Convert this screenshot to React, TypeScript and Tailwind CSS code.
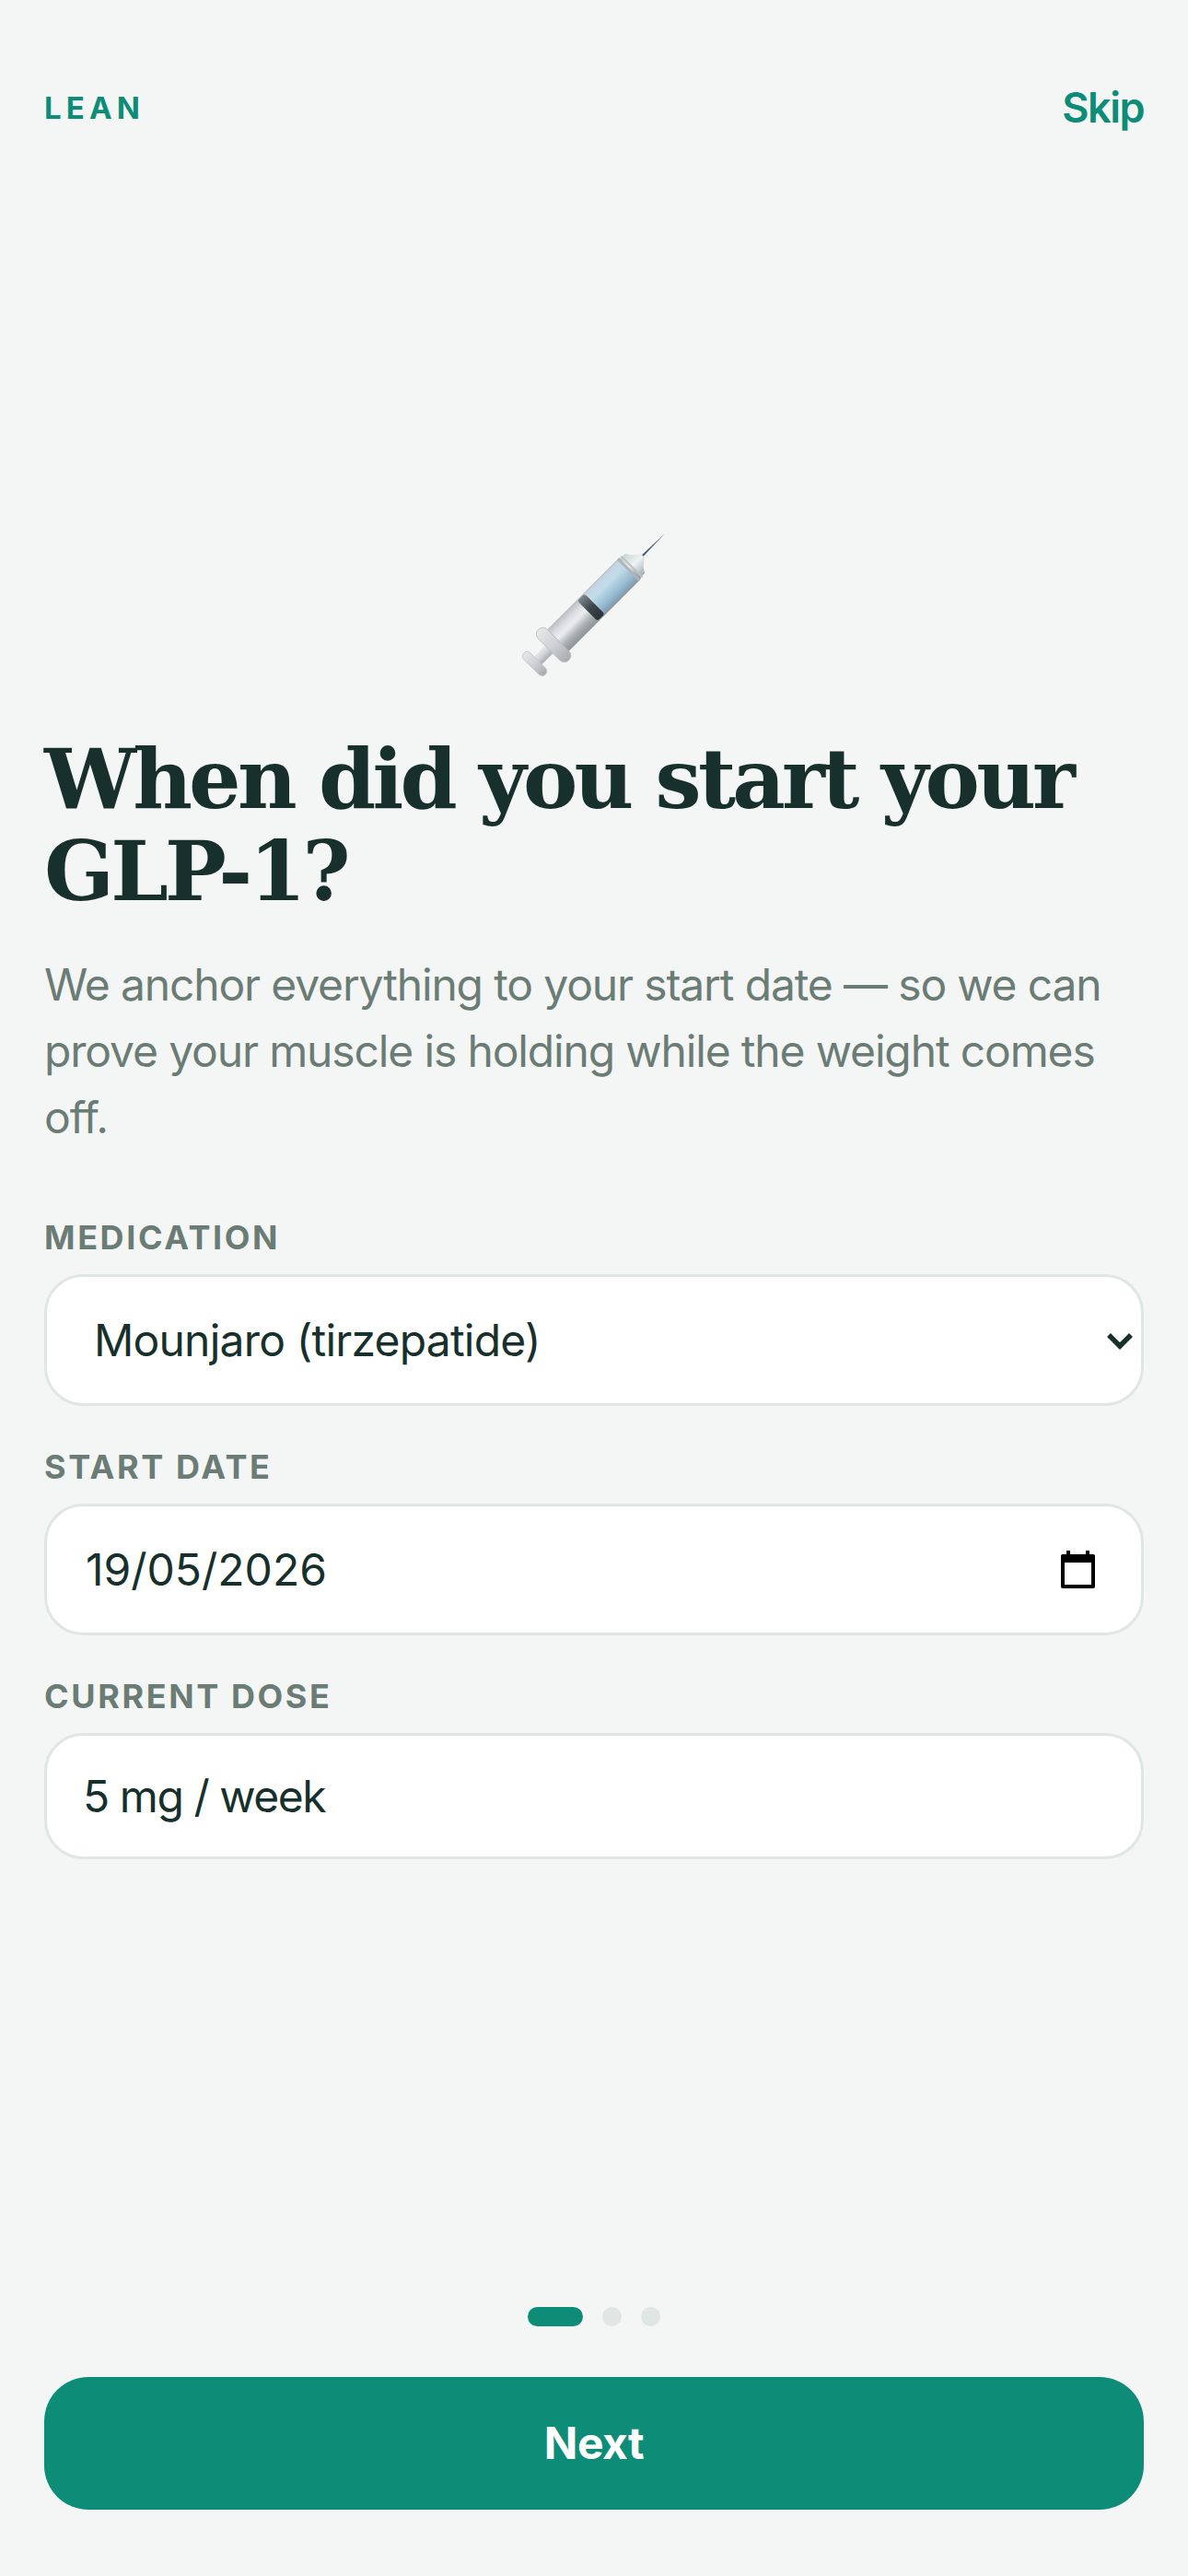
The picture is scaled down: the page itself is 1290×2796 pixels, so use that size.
import React from "react"

function Syringe() {
  return (
    <svg width="170" height="170" viewBox="0 0 170 170" className="block">
      <defs>
        <linearGradient id="glass" x1="0" y1="0" x2="0" y2="1">
          <stop offset="0" stopColor="#b9bec1" />
          <stop offset="0.22" stopColor="#d9dcde" />
          <stop offset="0.45" stopColor="#eceeef" />
          <stop offset="0.75" stopColor="#a9aeb1" />
          <stop offset="1" stopColor="#8d9396" />
        </linearGradient>
        <linearGradient id="fluid" x1="0" y1="0" x2="0" y2="1">
          <stop offset="0" stopColor="#c5d6df" />
          <stop offset="0.3" stopColor="#c2dcea" />
          <stop offset="0.7" stopColor="#9dc0d6" />
          <stop offset="1" stopColor="#7f9fb3" />
        </linearGradient>
        <linearGradient id="stopper" x1="0" y1="0" x2="0" y2="1">
          <stop offset="0" stopColor="#7d878c" />
          <stop offset="0.5" stopColor="#3d464c" />
          <stop offset="1" stopColor="#2a3237" />
        </linearGradient>
        <linearGradient id="steel" x1="0" y1="0" x2="0" y2="1">
          <stop offset="0" stopColor="#e6e8e9" />
          <stop offset="0.5" stopColor="#cfd2d4" />
          <stop offset="1" stopColor="#a7abae" />
        </linearGradient>
        <linearGradient id="nozzle" x1="0" y1="0" x2="0" y2="1">
          <stop offset="0" stopColor="#c9d6d5" />
          <stop offset="0.5" stopColor="#eef3f2" />
          <stop offset="1" stopColor="#9fb0b3" />
        </linearGradient>
      </defs>
      <g transform="translate(162 8) rotate(-45)">
        <path d="M-36 -1.2 L0 0 L-36 1.2 Z" fill="#4f6277" />
        <path d="M-54 -15 L-46 -15 C-42 -8 -38 -5 -34 -3 L-34 3 C-38 5 -42 8 -46 15 L-54 15 Z" fill="url(#nozzle)" />
        <rect x="-166" y="-16.5" width="114" height="33" rx="3" fill="url(#glass)" />
        <rect x="-108" y="-15" width="51" height="30" fill="url(#fluid)" />
        <rect x="-119" y="-15.5" width="11" height="31" rx="3" fill="url(#stopper)" />
        <rect x="-57" y="-16.5" width="3" height="33" fill="#aab6ba" />
        <rect x="-52" y="-16.5" width="2" height="33" rx="1" fill="#b7c2c4" />
        <rect x="-198" y="-6" width="26" height="12" fill="url(#steel)" />
        <rect x="-178" y="-23.5" width="14" height="47" rx="7" fill="url(#steel)" stroke="#b4b8ba" strokeWidth="0.75" />
        <rect x="-205" y="-16.5" width="10" height="33" rx="5" fill="url(#steel)" stroke="#bdc1c3" strokeWidth="0.75" />
      </g>
    </svg>
  )
}

function FieldLabel({ children }: { children: React.ReactNode }) {
  return <div className="text-[36px] leading-[44px] font-bold tracking-[2.6px] uppercase text-[#6b7c75]">{children}</div>
}

export default function App() {
  return (
    <div className="h-[2796px] w-[1290px] bg-[#f4f6f5] font-['Inter',sans-serif] px-12 flex flex-col text-[#17302c]">
      <div className="flex items-center justify-between pt-[87px]">
        <div className="text-[33px] leading-[60px] font-bold tracking-[5.1px] text-[#0d8c78]">LEAN</div>
        <div className="text-[45px] leading-[60px] font-semibold tracking-[-1.5px] text-[#0d8c78]">Skip</div>
      </div>

      <div className="mt-[424px] flex justify-center">
        <Syringe />
      </div>

      <h1 className="mt-[55px] font-['DejaVu_Serif',serif] text-[89px] leading-[100px] font-bold tracking-[-3.8px]">
        When did you start your GLP-1?
      </h1>

      <p className="mt-[37px] text-[48px] leading-[72px] tracking-[-1.15px] text-[#6b7c75]">
        We anchor everything to your start date — so we can prove your muscle is holding while the weight comes off.
      </p>

      <div className="mt-[72px]">
        <FieldLabel>Medication</FieldLabel>
        <div className="mt-[18px] h-[143px] rounded-[42px] border-[3px] border-[#dfe6e3] bg-white flex items-center justify-between pl-[51px] pr-[8px] text-[48px] tracking-[-0.8px]">
          <span>Mounjaro (tirzepatide)</span>
          <svg width="30" height="22" viewBox="0 0 30 22" fill="none">
            <path d="M3 5 L15 17 L27 5" stroke="#17302c" strokeWidth="5.5" />
          </svg>
        </div>
      </div>

      <div className="mt-[44px]">
        <FieldLabel>Start date</FieldLabel>
        <div className="mt-[18px] h-[143px] rounded-[42px] border-[3px] border-[#dfe6e3] bg-white flex items-center justify-between pl-[42px] pr-[50px] text-[48px]">
          <span>19/05/2026</span>
          <svg width="37" height="41" viewBox="0 0 37 41" fill="none">
            <path d="M2 4 H35 a2 2 0 0 1 2 2 V39 a2 2 0 0 1 -2 2 H2 a2 2 0 0 1 -2 -2 V6 a2 2 0 0 1 2 -2 Z" fill="#000" />
            <rect x="6" y="0" width="4" height="6" fill="#000" />
            <rect x="27" y="0" width="4" height="6" fill="#000" />
            <rect x="4" y="13" width="29" height="24" fill="#fff" />
          </svg>
        </div>
      </div>

      <div className="mt-[44px]">
        <FieldLabel>Current dose</FieldLabel>
        <input
          readOnly
          value="5 mg / week"
          className="mt-[18px] block w-full h-[137px] rounded-[42px] border-[3px] border-[#dfe6e3] bg-white pl-[39px] text-[48px] tracking-[-1.45px] outline-none"
        />
      </div>

      <div className="flex-1" />

      <div className="flex items-center justify-center gap-[21px]">
        <div className="h-[21px] w-[60px] rounded-full bg-[#0d8c78]" />
        <div className="h-[21px] w-[21px] rounded-full bg-[#dfe6e3]" />
        <div className="h-[21px] w-[21px] rounded-full bg-[#dfe6e3]" />
      </div>

      <button className="mt-[55px] mb-[72px] h-[144px] rounded-[48px] bg-[#0d8c78] text-white text-[48px] font-bold tracking-[-0.5px]">Next</button>
    </div>
  )
}
